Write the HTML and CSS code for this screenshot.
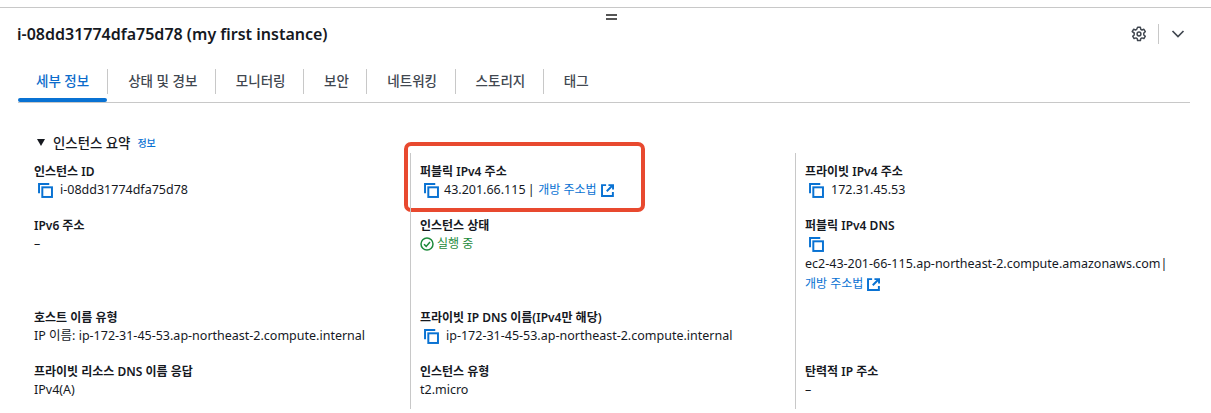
FILE: index.html
```html
<!doctype html>
<html lang="ko">
<head>
  <meta charset="UTF-8">
  <title>i-08dd31774dfa75d78</title>
  <link rel="stylesheet" href="styles.css">
</head>
<body>
  <svg class="defs" width="0" height="0">
    <symbol id="copy" viewBox="0 0 16 16">
      <path d="M1.100 11V1.100h10.900" fill="none" stroke="currentColor" stroke-width="2.100"/>
      <rect x="4.600" y="4.600" width="10.300" height="10.300" fill="none" stroke="currentColor" stroke-width="2.100"/>
    </symbol>
    <symbol id="external" viewBox="0 0 14 14">
      <path d="M5.500 1.200H1.100v11.700h11.700V8.500" fill="none" stroke="currentColor" stroke-width="2.100"/>
      <path d="M8 1.200h5V6M12.600 1.400 6.200 7.800" fill="none" stroke="currentColor" stroke-width="2.100"/>
    </symbol>
  </svg>

  <main class="panel">
    <div class="handle"></div>
    <header class="panel-head">
      <h1 class="title">i-08dd31774dfa75d78 (my first instance)</h1>
      <div class="actions">
        <svg class="gear" width="16" height="16" viewBox="0 0 16 16">
          <path d="M6.600 1.300h2.800l.4 2 1.200.7 1.900-.7 1.400 2.400-1.500 1.300v1.900l1.500 1.300-1.400 2.400-1.900-.7-1.200.7-.4 2H6.600l-.4-2-1.200-.7-1.900.7-1.400-2.400 1.500-1.300V7L1.200 5.700l1.400-2.400 1.900.7 1.200-.7z" fill="none" stroke="currentColor" stroke-width="1.500" stroke-linejoin="round"/>
          <circle cx="8" cy="8" r="1.900" fill="none" stroke="currentColor" stroke-width="1.500"/>
        </svg>
        <span class="divider"></span>
        <svg class="chevron" width="14" height="14" viewBox="0 0 14 14">
          <path d="M1.500 4l5.500 5.500L12.500 4" fill="none" stroke="currentColor" stroke-width="1.700"/>
        </svg>
      </div>
    </header>

    <nav class="tabs">
      <a class="tab active">세부 정보</a>
      <a class="tab">상태 및 경보</a>
      <a class="tab">모니터링</a>
      <a class="tab">보안</a>
      <a class="tab">네트워킹</a>
      <a class="tab">스토리지</a>
      <a class="tab">태그</a>
    </nav>

    <section class="summary">
      <h2 class="summary-title"><span class="caret"></span>인스턴스 요약<a class="info">정보</a></h2>
      <div class="grid">
        <div class="item">
          <div class="label">인스턴스 ID</div>
          <div class="value"><svg class="copy"><use href="#copy"/></svg>i-08dd31774dfa75d78</div>
        </div>
        <div class="item col-mid">
          <div class="label">퍼블릭 IPv4 주소</div>
          <div class="value"><svg class="copy near"><use href="#copy"/></svg>43.201.66.115 <span class="sep">|</span> <a class="link">개방 주소법<svg class="ext"><use href="#external"/></svg></a></div>
          <span class="highlight"></span>
        </div>
        <div class="item col-end">
          <div class="label">프라이빗 IPv4 주소</div>
          <div class="value"><svg class="copy"><use href="#copy"/></svg>172.31.45.53</div>
        </div>

        <div class="item">
          <div class="label">IPv6 주소</div>
          <div class="value">–</div>
        </div>
        <div class="item col-mid">
          <div class="label">인스턴스 상태</div>
          <div class="value running">
            <svg class="status" width="14" height="14" viewBox="0 0 14 14">
              <circle cx="7" cy="7" r="6" fill="none" stroke="currentColor" stroke-width="1.500"/>
              <path d="M4 7.200l2.200 2.200L10 5" fill="none" stroke="currentColor" stroke-width="1.500"/>
            </svg>실행 중</div>
        </div>
        <div class="item col-end">
          <div class="label">퍼블릭 IPv4 DNS</div>
          <div class="value"><svg class="copy"><use href="#copy"/></svg></div>
          <div class="value">ec2-43-201-66-115.ap-northeast-2.compute.amazonaws.com|</div>
          <div class="value"><a class="link">개방 주소법<svg class="ext"><use href="#external"/></svg></a></div>
        </div>

        <div class="item">
          <div class="label">호스트 이름 유형</div>
          <div class="value">IP 이름: ip-172-31-45-53.ap-northeast-2.compute.internal</div>
        </div>
        <div class="item col-mid">
          <div class="label">프라이빗 IP DNS 이름(IPv4만 해당)</div>
          <div class="value"><svg class="copy"><use href="#copy"/></svg>ip-172-31-45-53.ap-northeast-2.compute.internal</div>
        </div>
        <div class="item col-end"></div>

        <div class="item">
          <div class="label">프라이빗 리소스 DNS 이름 응답</div>
          <div class="value">IPv4(A)</div>
        </div>
        <div class="item col-mid">
          <div class="label">인스턴스 유형</div>
          <div class="value">t2.micro</div>
        </div>
        <div class="item col-end">
          <div class="label">탄력적 IP 주소</div>
          <div class="value">–</div>
        </div>
      </div>
    </section>
  </main>
</body>
</html>
```

FILE: styles.css
```css
html, body {
  margin: 0;
  height: 413px;
  overflow: hidden;
  background: #fff;
}
body {
  padding-top: 7px;
  box-sizing: border-box;
  font-family: "Noto Sans", "Noto Sans CJK KR", sans-serif;
  font-size: 12px;
  color: #16191f;
}
.defs {
  position: absolute;
}
.panel {
  position: relative;
  border-top: 1px solid #c8c8c8;
  padding: 0 21px 0 17px;
}
.handle {
  position: absolute;
  top: 6px;
  left: 606px;
  width: 11px;
  height: 2px;
  border-top: 2px solid #555;
  border-bottom: 2px solid #555;
}
.panel-head {
  display: flex;
  justify-content: space-between;
  align-items: center;
  height: 52px;
}
.title {
  margin: 0;
  font-size: 16px;
  font-weight: 600;
}
.actions {
  display: flex;
  align-items: center;
  padding-right: 5px;
  color: #414750;
}
.gear {
  margin-right: 11px;
}
.divider {
  width: 1px;
  height: 20px;
  background: #c8c8c8;
  margin-right: 12px;
}

.tabs {
  display: flex;
  margin: 8px 0 0 1px;
  height: 34px;
  border-bottom: 1px solid #c8c8c8;
  position: relative;
}
.tab {
  display: block;
  height: 25px;
  line-height: 24px;
  margin-top: 1px;
  padding: 0 17.500px 0 20px;
  font-size: 13.500px;
  font-weight: 500;
  color: #414750;
  border-left: 1px solid #c8c8c8;
}
.tab.active {
  padding: 0 18px;
  border-left: 0;
  color: #0b6bcb;
  position: relative;
}
.tab.active::after {
  content: "";
  position: absolute;
  left: 0;
  right: 0;
  top: 29px;
  height: 4px;
  border-radius: 2px;
  background: #0972d3;
}

.summary {
  padding-left: 17px;
}
.summary-title {
  display: flex;
  align-items: center;
  margin: 29px 0 0;
  height: 20px;
  font-size: 13.400px;
  font-weight: 500;
}
.caret {
  width: 0;
  height: 0;
  margin: 0 8px 0 3px;
  border-left: 4.500px solid transparent;
  border-right: 4.500px solid transparent;
  border-top: 7px solid #16191f;
}
.info {
  margin-left: 7px;
  font-size: 10px;
  color: #0972d3;
}

.grid {
  display: grid;
  grid-template-columns: 376px 385px 1fr;
  grid-template-rows: 54px 92px 54px 56px;
  margin-top: 1px;
}
.item {
  padding-top: 10px;
  position: relative;
}
.col-mid, .col-end {
  padding-left: 9px;
  border-left: 1px solid #c8c8c8;
}
.label {
  height: 17px;
  line-height: 17px;
  font-weight: 600;
}
.value {
  display: flex;
  align-items: center;
  min-height: 20px;
  line-height: 20px;
  font-size: 12.500px;
  white-space: pre;
}
.copy {
  width: 15px;
  height: 15px;
  margin: 0 7px 0 4px;
  color: #0972d3;
  flex: none;
}
.copy.near {
  margin-right: 5px;
}
.sep {
  margin: 0 3.500px 0 -1px;
}
.link {
  display: inline-flex;
  align-items: center;
  font-size: 12px;
  color: #0972d3;
}
.ext {
  width: 13px;
  height: 13px;
  margin-left: 4px;
}
.running {
  font-size: 12px;
  color: #1d8a3a;
}
.status {
  margin-right: 3px;
}
.highlight {
  position: absolute;
  left: -7px;
  top: -11px;
  width: 233px;
  height: 62px;
  border: 4px solid #e8492f;
  border-radius: 7px;
}
```
